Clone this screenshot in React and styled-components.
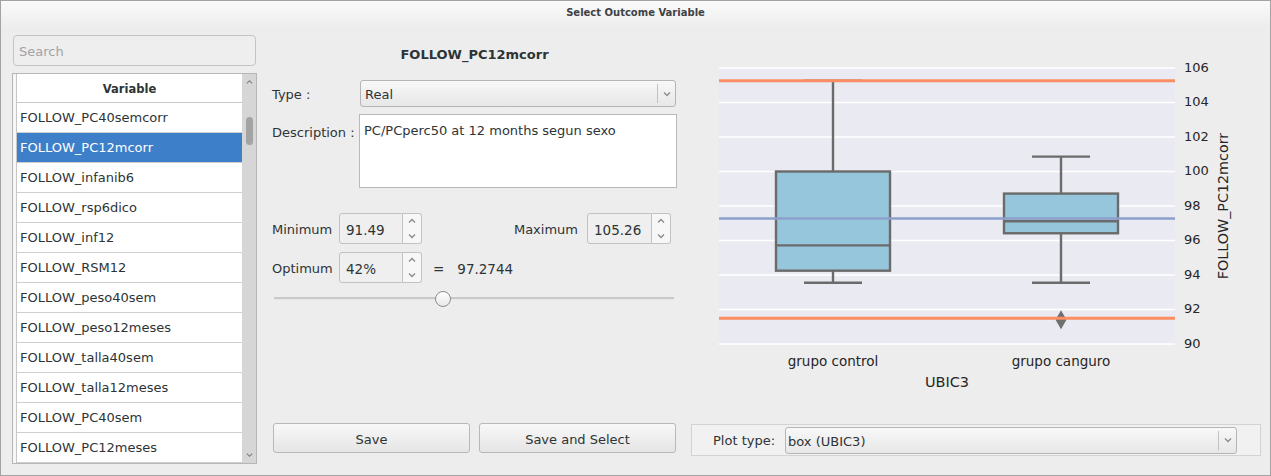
import React from "react";
import styled, { createGlobalStyle } from "styled-components";

const GlobalStyle = createGlobalStyle`
  html, body {
    margin: 0;
    padding: 0;
    background: #ededed;
  }
  body {
    font-family: "DejaVu Sans", "Liberation Sans", sans-serif;
    color: #2e3436;
  }
  * {
    box-sizing: border-box;
  }
`;

const Window = styled.div`
  width: 1271px;
  height: 476px;
  border: 1px solid #a3a3a3;
  background: #ededed;
  display: flex;
  flex-direction: column;
  overflow: hidden;
`;

const TitleBar = styled.div`
  height: 26px;
  flex: none;
  background: linear-gradient(#fafafa, #ededed);
  display: flex;
  justify-content: center;
  padding-top: 5px;
  font-size: 10px;
  line-height: 13px;
  font-weight: bold;
  color: #3d4245;
`;

const Body = styled.div`
  flex: 1;
  display: flex;
  padding: 8px 9px 11px 11px;
  min-height: 0;
`;

/* ---------- left column ---------- */

const LeftCol = styled.div`
  width: 245px;
  flex: none;
  display: flex;
  flex-direction: column;
  gap: 7px;
`;

const SearchInput = styled.input`
  height: 31px;
  margin: 0 1px;
  border: 1px solid #c4c4c4;
  border-radius: 4px;
  background: #eeeeee;
  padding: 2px 5px 0;
  font: 13px "DejaVu Sans", sans-serif;
  color: #2e3436;
  outline: none;
  &::placeholder {
    color: #a2a2a2;
  }
`;

const List = styled.div`
  flex: 1;
  display: flex;
  border: 1px solid #b6b6b6;
  background: #fff;
  min-height: 0;
`;

const LeftStrip = styled.div`
  width: 4px;
  flex: none;
  background: #f6f6f6;
  border-right: 1px solid #c6c6c6;
`;

const Table = styled.div`
  flex: 1;
  display: flex;
  flex-direction: column;
  overflow: hidden;
`;

const HeaderCell = styled.div`
  height: 29px;
  flex: none;
  border-bottom: 1px solid #c8c8c8;
  display: flex;
  align-items: center;
  justify-content: center;
  padding-top: 2px;
  font-size: 11.5px;
  font-weight: bold;
  color: #2e3436;
`;

const Row = styled.div`
  height: 30px;
  flex: none;
  border-bottom: 1px solid #cfcfcf;
  padding: 1px 0 0 3px;
  font-size: 13px;
  line-height: 28px;
  white-space: nowrap;
  background: ${(p) => (p.$selected ? "#3d80c9" : "#fff")};
  color: ${(p) => (p.$selected ? "#fff" : "#2e3436")};
`;

const Scrollbar = styled.div`
  width: 14px;
  flex: none;
  background: #d6d6d6;
  display: flex;
  flex-direction: column;
  align-items: center;
`;

const ScrollArrow = styled.div`
  height: 16px;
  display: flex;
  align-items: center;
  justify-content: center;
  margin-top: ${(p) => (p.$down ? "auto" : "0")};
`;

const Thumb = styled.div`
  width: 7px;
  height: 28px;
  margin-top: 27px;
  border-radius: 4px;
  background: #a3a3a3;
`;

/* ---------- middle column ---------- */

const MiddleCol = styled.div`
  width: 405px;
  flex: none;
  margin-left: 15px;
  display: flex;
  flex-direction: column;
  font-size: 13px;
`;

const VarTitle = styled.div`
  margin-top: 11px;
  line-height: 18px;
  text-align: center;
  font-weight: bold;
  font-size: 13px;
  color: #2e3436;
`;

const FormGrid = styled.div`
  margin-top: 16px;
  display: grid;
  grid-template-columns: 88px 1fr;
  row-gap: 7px;
`;

const Label = styled.div`
  display: flex;
  align-items: ${(p) => (p.$top ? "flex-start" : "center")};
  padding-top: ${(p) => (p.$top ? "11px" : "2px")};
  line-height: 16px;
  white-space: nowrap;
  width: ${(p) => (p.$width ? `${p.$width}px` : "auto")};
  flex: none;
`;

const Combo = styled.div`
  height: 27px;
  display: flex;
  align-items: stretch;
  border: 1px solid #b5b5b5;
  border-radius: 3px;
  background: linear-gradient(#f8f8f8, #e7e7e7);
  margin-right: ${(p) => p.$mr || 0}px;
  margin-left: ${(p) => p.$ml || 0}px;
  flex: ${(p) => (p.$grow ? 1 : "none")};
`;

const ComboText = styled.div`
  flex: 1;
  display: flex;
  align-items: center;
  padding-left: ${(p) => p.$pad || 4}px;
  padding-top: 2px;
  font-size: 13px;
  color: #2e3436;
`;

const ComboArrow = styled.div`
  width: 18px;
  display: flex;
  align-items: center;
  justify-content: center;
  border-left: 1px solid #c2c2c2;
  margin: 3px 0;
`;

const TextArea = styled.div`
  height: 74px;
  margin-left: -1px;
  background: #fff;
  border: 1px solid #b9b9b9;
  padding: 8px 4px;
  line-height: 16px;
  font-size: 13px;
`;

const RangeRow = styled.div`
  margin-top: ${(p) => p.$mt}px;
  height: 31px;
  display: flex;
  align-items: center;
  padding-right: 6px;
`;

const Gap = styled.div`
  flex: 1;
`;

const Spin = styled.div`
  display: flex;
  height: 31px;
  flex: none;
  margin-left: ${(p) => p.$ml || 0}px;
`;

const SpinField = styled.div`
  width: ${(p) => p.$width}px;
  border: 1px solid #c2c2c2;
  border-radius: 3px 0 0 3px;
  background: #efefef;
  display: flex;
  align-items: center;
  padding: 2px 0 0 6px;
  font-size: 13.5px;
`;

const SpinButtons = styled.div`
  width: 19px;
  border: 1px solid #c2c2c2;
  border-left: none;
  border-radius: 0 3px 3px 0;
  background: #f7f7f7;
  display: flex;
  flex-direction: column;
`;

const SpinHalf = styled.div`
  flex: 1;
  display: flex;
  align-items: center;
  justify-content: center;
`;

const Equals = styled.div`
  margin-left: 11px;
  padding-top: 2px;
  font-size: 13.5px;
`;

const Result = styled.div`
  margin-left: 13px;
  padding-top: 2px;
  font-size: 13.5px;
`;

const Slider = styled.div`
  margin: 7px 3px 0 2px;
  height: 17px;
  display: flex;
  align-items: center;
  background: linear-gradient(
    transparent 7px,
    #c9c9c9 7px,
    #c9c9c9 9px,
    #e6e6e6 9px,
    #e6e6e6 10px,
    transparent 10px
  );
`;

const Handle = styled.div`
  width: 16px;
  height: 16px;
  border-radius: 50%;
  border: 1px solid #8c8c8c;
  background: linear-gradient(#ffffff, #e9e9e9);
`;

const ButtonRow = styled.div`
  margin-top: auto;
  margin-bottom: 11px;
  display: flex;
  gap: 9px;
  padding: 0 1px;
`;

const Button = styled.div`
  flex: 1;
  height: 30px;
  border: 1px solid #b8b8b8;
  border-radius: 3px;
  background: linear-gradient(#f8f8f8, #e5e5e5);
  display: flex;
  align-items: center;
  justify-content: center;
  padding-top: 2px;
  font-size: 13px;
  color: #2e3436;
`;

/* ---------- right column ---------- */

const RightCol = styled.div`
  width: 570px;
  flex: none;
  margin-left: 14px;
  display: flex;
  flex-direction: column;
`;

const ChartSvg = styled.svg`
  display: block;
  flex: none;
`;

const PlotPanel = styled.div`
  height: 32px;
  margin-bottom: 8px;
  display: flex;
  align-items: center;
  padding: 0 23px 0 21px;
  border: 1px solid #d3d3d3;
  background: #f1f1f1;
  font-size: 13px;
`;

/* ---------- icons ---------- */

function Chevron({ dir = "down", size = 8, color = "#8a8a8a" }) {
  const pts = dir === "down" ? "1,1.5 4,4.5 7,1.5" : "1,4.5 4,1.5 7,4.5";
  return (
    <svg width={size} height={6} viewBox="0 0 8 6">
      <polyline points={pts} fill="none" stroke={color} strokeWidth="1.3" />
    </svg>
  );
}

function SpinBox({ value, width, ml }) {
  return (
    <Spin $ml={ml}>
      <SpinField $width={width}>{value}</SpinField>
      <SpinButtons>
        <SpinHalf>
          <Chevron dir="up" />
        </SpinHalf>
        <SpinHalf>
          <Chevron dir="down" />
        </SpinHalf>
      </SpinButtons>
    </Spin>
  );
}

/* ---------- chart ---------- */

const PX0 = 28;
const PX1 = 484;
const Y = (v) => 309 - (v - 90) * 17.25;

const boxes = [
  { c: 142, whi: 105.26, q3: 100.0, med: 95.72, q1: 94.25, wlo: 93.55, label: "grupo control" },
  { c: 370, whi: 100.86, q3: 98.72, med: 97.12, q1: 96.42, wlo: 93.55, label: "grupo canguro", outlier: 91.4 },
];

const ticks = [90, 92, 94, 96, 98, 100, 102, 104, 106];

function BoxChart() {
  const hw = 57;
  const cap = 29;
  const stroke = "#6b6b6b";
  return (
    <ChartSvg width="570" height="389" viewBox="0 0 570 389">
      <rect x={PX0} y={Y(106)} width={PX1 - PX0} height={Y(90) - Y(106)} fill="#eaeaf2" />
      {ticks.map((t) => (
        <line key={t} x1={PX0} x2={PX1} y1={Y(t)} y2={Y(t)} stroke="#fff" strokeWidth="1.4" />
      ))}
      {boxes.map((b) => (
        <g key={b.label} stroke={stroke} strokeWidth="2.4" fill="none">
          <line x1={b.c} x2={b.c} y1={Y(b.whi)} y2={Y(b.q3)} />
          <line x1={b.c} x2={b.c} y1={Y(b.q1)} y2={Y(b.wlo)} />
          <line x1={b.c - cap} x2={b.c + cap} y1={Y(b.whi)} y2={Y(b.whi)} />
          <line x1={b.c - cap} x2={b.c + cap} y1={Y(b.wlo)} y2={Y(b.wlo)} />
          <rect x={b.c - hw} y={Y(b.q3)} width={hw * 2} height={Y(b.q1) - Y(b.q3)} fill="#96c6db" />
          <line x1={b.c - hw} x2={b.c + hw} y1={Y(b.med)} y2={Y(b.med)} />
          {b.outlier ? (
            <polygon
              points={`${b.c},${Y(b.outlier) - 9.5} ${b.c + 5.5},${Y(b.outlier)} ${b.c},${Y(b.outlier) + 9.5} ${b.c - 5.5},${Y(b.outlier)}`}
              fill="#6f6f6f"
              stroke="none"
            />
          ) : null}
        </g>
      ))}
      <line x1={PX0} x2={PX1} y1={Y(105.26)} y2={Y(105.26)} stroke="#fc8d62" strokeWidth="3" />
      <line x1={PX0} x2={PX1} y1={Y(91.49)} y2={Y(91.49)} stroke="#fc8d62" strokeWidth="3" />
      <line x1={PX0} x2={PX1} y1={Y(97.2744)} y2={Y(97.2744)} stroke="#8da0cb" strokeWidth="2.6" />
      <g fontFamily="DejaVu Sans, sans-serif" fill="#262626">
        {ticks.map((t) => (
          <text key={t} x="493" y={Y(t) - 1} fontSize="13" dominantBaseline="central">
            {t}
          </text>
        ))}
        {boxes.map((b) => (
          <text key={b.label} x={b.c} y="326" fontSize="13.5" textAnchor="middle" dominantBaseline="central">
            {b.label}
          </text>
        ))}
        <text x="256" y="347" fontSize="14.5" textAnchor="middle" dominantBaseline="central">
          UBIC3
        </text>
        <text
          x="532"
          y="171"
          fontSize="14.3"
          textAnchor="middle"
          dominantBaseline="central"
          transform="rotate(-90 532 171)"
        >
          FOLLOW_PC12mcorr
        </text>
      </g>
    </ChartSvg>
  );
}

/* ---------- app ---------- */

const variables = [
  "FOLLOW_PC40semcorr",
  "FOLLOW_PC12mcorr",
  "FOLLOW_infanib6",
  "FOLLOW_rsp6dico",
  "FOLLOW_inf12",
  "FOLLOW_RSM12",
  "FOLLOW_peso40sem",
  "FOLLOW_peso12meses",
  "FOLLOW_talla40sem",
  "FOLLOW_talla12meses",
  "FOLLOW_PC40sem",
  "FOLLOW_PC12meses",
];

export default function App() {
  const optimum = 42;
  return (
    <>
      <GlobalStyle />
      <Window>
        <TitleBar>Select Outcome Variable</TitleBar>
        <Body>
          <LeftCol>
            <SearchInput placeholder="Search" />
            <List>
              <LeftStrip />
              <Table>
                <HeaderCell>Variable</HeaderCell>
                {variables.map((v) => (
                  <Row key={v} $selected={v === "FOLLOW_PC12mcorr"}>
                    {v}
                  </Row>
                ))}
              </Table>
              <Scrollbar>
                <ScrollArrow>
                  <Chevron dir="up" size={7} color="#7d7d7d" />
                </ScrollArrow>
                <Thumb />
                <ScrollArrow $down>
                  <Chevron dir="down" size={7} color="#7d7d7d" />
                </ScrollArrow>
              </Scrollbar>
            </List>
          </LeftCol>

          <MiddleCol>
            <VarTitle>FOLLOW_PC12mcorr</VarTitle>
            <FormGrid>
              <Label>Type :</Label>
              <Combo $mr={1}>
                <ComboText>Real</ComboText>
                <ComboArrow>
                  <Chevron />
                </ComboArrow>
              </Combo>
              <Label $top>Description :</Label>
              <TextArea>PC/PCperc50 at 12 months segun sexo</TextArea>
            </FormGrid>
            <RangeRow $mt={25}>
              <Label $width={67}>Minimum</Label>
              <SpinBox value="91.49" width={64} />
              <Gap />
              <Label>Maximum</Label>
              <SpinBox value="105.26" width={65} ml={9} />
            </RangeRow>
            <RangeRow $mt={8}>
              <Label $width={67}>Optimum</Label>
              <SpinBox value="42%" width={64} />
              <Equals>=</Equals>
              <Result>97.2744</Result>
            </RangeRow>
            <Slider>
              <Handle style={{ marginLeft: `calc(${optimum}% - ${(optimum / 100) * 16}px)` }} />
            </Slider>
            <ButtonRow>
              <Button>Save</Button>
              <Button>Save and Select</Button>
            </ButtonRow>
          </MiddleCol>

          <RightCol>
            <BoxChart />
            <PlotPanel>
              <Label>Plot type:</Label>
              <Combo $grow $ml={10}>
                <ComboText $pad={2}>box (UBIC3)</ComboText>
                <ComboArrow>
                  <Chevron />
                </ComboArrow>
              </Combo>
            </PlotPanel>
          </RightCol>
        </Body>
      </Window>
    </>
  );
}
